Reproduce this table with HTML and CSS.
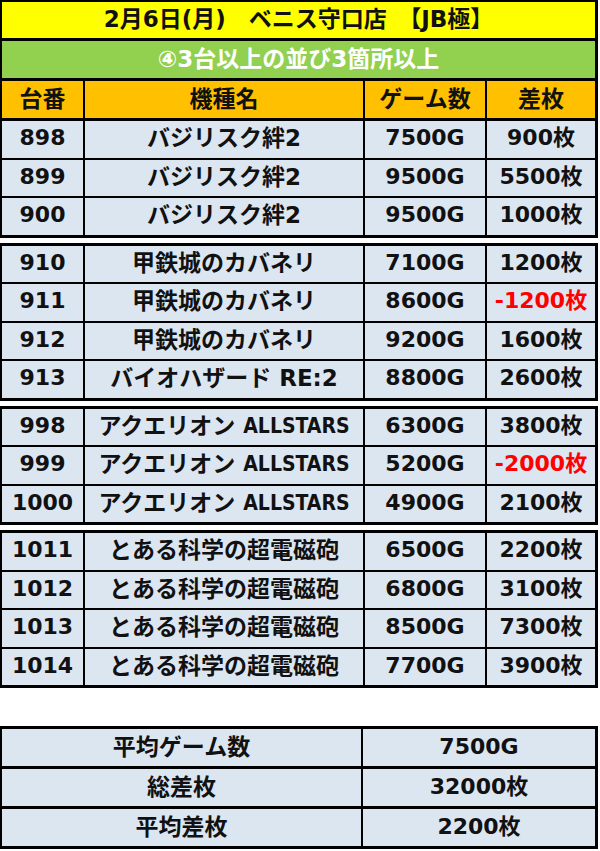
FILE: index.html
```html
<!DOCTYPE html>
<html lang="ja">
<head>
<meta charset="utf-8">
<title>ベニス守口店 JB極</title>
<link rel="stylesheet" href="styles.css">
</head>
<body>
<div class="sheet">
  <div class="block block-head">
    <div class="title">2月6日(月)　ベニス守口店　【JB極】</div>
    <div class="subtitle">④3台以上の並び3箇所以上</div>
    <div class="row header"><div>台番</div><div>機種名</div><div>ゲーム数</div><div>差枚</div></div>
    <div class="row"><div class="num">898</div><div>バジリスク絆2</div><div class="num">7500G</div><div class="num">900枚</div></div>
    <div class="row"><div class="num">899</div><div>バジリスク絆2</div><div class="num">9500G</div><div class="num">5500枚</div></div>
    <div class="row"><div class="num">900</div><div>バジリスク絆2</div><div class="num">9500G</div><div class="num">1000枚</div></div>
  </div>
  <div class="block">
    <div class="row"><div class="num">910</div><div>甲鉄城のカバネリ</div><div class="num">7100G</div><div class="num">1200枚</div></div>
    <div class="row"><div class="num">911</div><div>甲鉄城のカバネリ</div><div class="num">8600G</div><div class="num minus">-1200枚</div></div>
    <div class="row"><div class="num">912</div><div>甲鉄城のカバネリ</div><div class="num">9200G</div><div class="num">1600枚</div></div>
    <div class="row"><div class="num">913</div><div>バイオハザード RE:2</div><div class="num">8800G</div><div class="num">2600枚</div></div>
  </div>
  <div class="block">
    <div class="row"><div class="num">998</div><div>アクエリオン <span class="lat">ALLSTARS</span></div><div class="num">6300G</div><div class="num">3800枚</div></div>
    <div class="row"><div class="num">999</div><div>アクエリオン <span class="lat">ALLSTARS</span></div><div class="num">5200G</div><div class="num minus">-2000枚</div></div>
    <div class="row"><div class="num">1000</div><div>アクエリオン <span class="lat">ALLSTARS</span></div><div class="num">4900G</div><div class="num">2100枚</div></div>
  </div>
  <div class="block">
    <div class="row"><div class="num">1011</div><div>とある科学の超電磁砲</div><div class="num">6500G</div><div class="num">2200枚</div></div>
    <div class="row"><div class="num">1012</div><div>とある科学の超電磁砲</div><div class="num">6800G</div><div class="num">3100枚</div></div>
    <div class="row"><div class="num">1013</div><div>とある科学の超電磁砲</div><div class="num">8500G</div><div class="num">7300枚</div></div>
    <div class="row"><div class="num">1014</div><div>とある科学の超電磁砲</div><div class="num">7700G</div><div class="num">3900枚</div></div>
  </div>
  <div class="block summary">
    <div class="srow"><div>平均ゲーム数</div><div class="num">7500G</div></div>
    <div class="srow"><div>総差枚</div><div class="num">32000枚</div></div>
    <div class="srow"><div>平均差枚</div><div class="num">2200枚</div></div>
  </div>
</div>
</body>
</html>
```

FILE: styles.css
```css
html, body {
  margin: 0;
  padding: 0;
  background: #fff;
}

.sheet {
  width: 598px;
  font-family: "DejaVu Sans", "Noto Sans CJK JP", sans-serif;
  font-weight: 700;
  font-size: 23px;
  line-height: 28px;
  color: #111;
}

.block {
  display: flex;
  flex-direction: column;
  gap: 2px;
  background: #000;
  border: 3px solid #000;
  border-left-width: 2px;
  margin-top: 5px;
}

.block-head {
  margin-top: 0;
  border-top-width: 2px;
}

.title {
  height: 36px;
  margin-bottom: 1px;
  background: #ffff00;
  display: flex;
  align-items: center;
  justify-content: center;
  padding-bottom: 2px;
  box-sizing: border-box;
  white-space: pre;
}

.subtitle {
  height: 37px;
  margin-bottom: 1px;
  background: #92d050;
  color: #fff;
  display: flex;
  align-items: center;
  justify-content: center;
  padding-bottom: 2px;
  box-sizing: border-box;
}

.row {
  display: grid;
  grid-template-columns: 81px 278px 120px 1fr;
  column-gap: 2px;
  height: 36.5px;
}

.row > div {
  background: #dce6f1;
  display: flex;
  align-items: center;
  justify-content: center;
  padding-bottom: 2px;
  box-sizing: border-box;
  white-space: pre;
}

.row.header {
  height: 37px;
  margin-bottom: 1px;
}

.row.header > div {
  background: #ffc000;
}

.num {
  font-size: 22px;
}

.lat {
  font-family: "DejaVu Sans Condensed", "DejaVu Sans", sans-serif;
  font-size: 21px;
}

.minus {
  color: #ff0000;
}

.summary {
  margin-top: 38px;
  gap: 3px;
}

.srow {
  display: grid;
  grid-template-columns: 359px 1fr;
  column-gap: 2px;
  height: 37px;
}

.srow > div {
  background: #dce6f1;
  display: flex;
  align-items: center;
  justify-content: center;
  padding-bottom: 2px;
  box-sizing: border-box;
}
```
